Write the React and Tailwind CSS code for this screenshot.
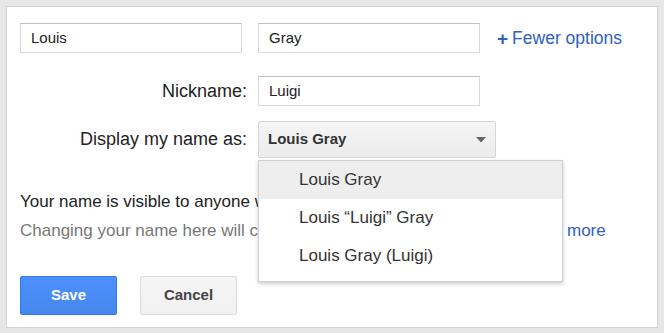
import React from 'react'

const font = { fontFamily: '"Liberation Sans", Arial, sans-serif' }

const TextBox = ({ value }) => (
  <div className="h-[30px] w-[222px] border border-[#d9d9d9] border-t-[#c0c0c0] bg-white px-[10px] flex items-center text-[15px] text-[#222]">
    {value}
  </div>
)

const options = ['Louis Gray', 'Louis \u201cLuigi\u201d Gray', 'Louis Gray (Luigi)']

export default function App() {
  return (
    <div className="w-[664px] h-[333px] bg-[#e6e6e6] p-[6px] pb-[5px]" style={font}>
      <div className="relative h-full bg-white border border-[#d4d4d4] pl-[13px] pt-[16px]">
        {/* name row */}
        <div className="flex items-center">
          <TextBox value="Louis" />
          <div className="ml-[16px]">
            <TextBox value="Gray" />
          </div>
          <a className="ml-[17px] text-[17.5px] text-[#2f5fbf] flex items-center">
            <span className="font-bold mr-[4px] text-[19px] leading-none">+</span>Fewer options
          </a>
        </div>

        {/* nickname */}
        <div className="flex items-center mt-[23px]">
          <div className="w-[227px] text-right text-[18px] text-[#222]">Nickname:</div>
          <div className="ml-[11px]">
            <TextBox value="Luigi" />
          </div>
        </div>

        {/* display name select */}
        <div className="flex items-center mt-[15px]">
          <div className="w-[227px] text-right text-[18px] text-[#222]">Display my name as:</div>
          <div className="ml-[11px] relative">
            <div className="h-[37px] w-[238px] rounded-[2px] border border-[#d6d6d6] bg-gradient-to-b from-[#f5f5f5] to-[#ececec] flex items-center justify-between pl-[9px] pr-[9px] text-[15px] font-bold text-[#333]">
              Louis Gray
              <svg width="10" height="6" viewBox="0 0 10 6">
                <path d="M0 0h10L5 5.5z" fill="#666" />
              </svg>
            </div>
            {/* open menu */}
            <div className="absolute left-0 top-[39px] z-10 w-[305px] bg-white border border-[#d0d0d0] shadow-[0_2px_4px_rgba(0,0,0,0.2)] pb-[6px]">
              {options.map((o, i) => (
                <div
                  key={o}
                  className={`h-[38px] flex items-center pl-[40px] text-[17px] text-[#333] ${i === 0 ? 'bg-[#eeeeee]' : ''}`}
                >
                  {o}
                </div>
              ))}
            </div>
          </div>
        </div>

        {/* info text, cut off by the open menu */}
        <div className="mt-[29px] text-[17px] leading-[29px] whitespace-nowrap">
          <div className="text-[#222] w-[238px] overflow-hidden">Your name is visible to anyone who can see your profile.</div>
          <div className="text-[#777] flex">
            <span className="w-[238px] overflow-hidden">Changing your name here will change it in all Google products. Learn</span>
            <a className="ml-[309px] text-[#2f5fbf]">more</a>
          </div>
        </div>

        {/* buttons */}
        <div className="flex mt-[31px] gap-[23px]">
          <button className="h-[39px] w-[97px] rounded-[2px] border border-[#3079ed] bg-gradient-to-b from-[#4d90fe] to-[#4787ed] text-white text-[15px] font-bold">
            Save
          </button>
          <button className="h-[39px] w-[97px] rounded-[2px] border border-[#dcdcdc] bg-gradient-to-b from-[#f5f5f5] to-[#f1f1f1] text-[#444] text-[15px] font-bold">
            Cancel
          </button>
        </div>
      </div>
    </div>
  )
}
